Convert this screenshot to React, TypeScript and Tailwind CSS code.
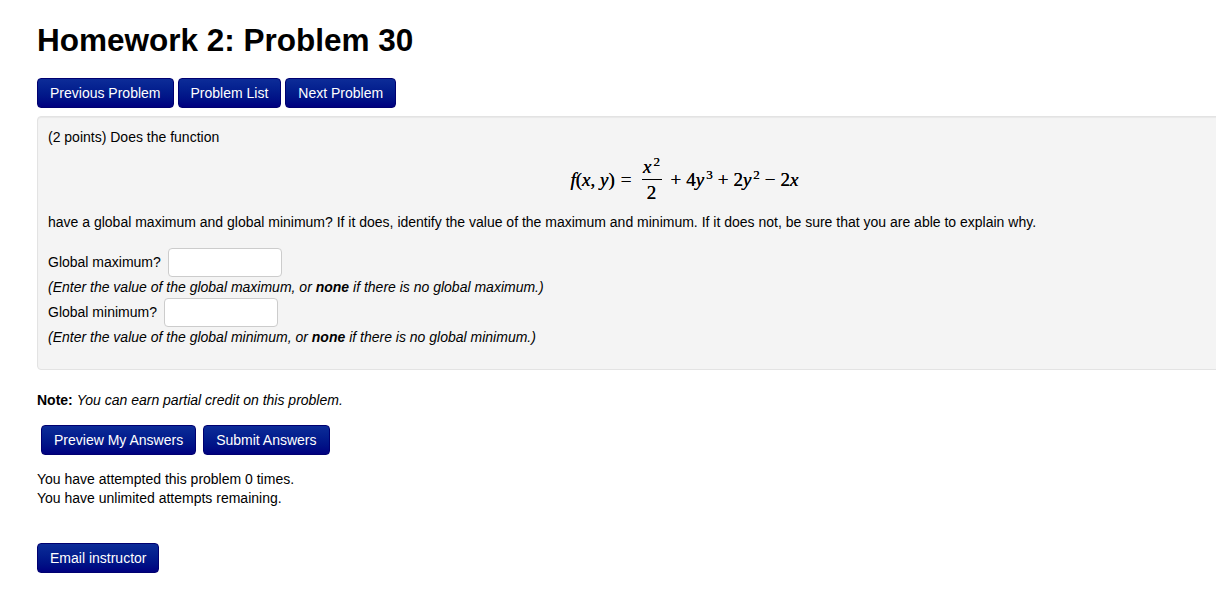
const btn =
  "h-[30px] rounded-[4px] border border-[#000070] bg-linear-to-b from-[#0d2c98] to-[#00007f] px-3 text-[14px] leading-none text-white";

const sup = "relative -top-[7px] ml-[2px] align-baseline text-[13px]";

function Fraction() {
  return (
    <span className="inline-flex flex-col items-center px-[4px]">
      <span className="pb-[3px] leading-none">
        <i>x</i>
        <sup className={sup}>2</sup>
      </span>
      <span className="h-px w-[20px] bg-black" />
      <span className="pt-[3px] leading-none">2</span>
    </span>
  );
}

function Equation() {
  return (
    <div className="flex h-[65px] items-center justify-center font-['Liberation_Serif','Times_New_Roman',serif] text-[19px] text-black [text-shadow:0_0_0.4px_#000]">
      <span className="leading-none">
        <i>f</i>(<i>x</i>, <i>y</i>)<span className="px-[6px]">=</span>
      </span>
      <Fraction />
      <span className="leading-none">
        <span className="px-[5px]">+</span>4<i>y</i>
        <sup className={sup}>3</sup>
        <span className="px-[5px]">+</span>2<i>y</i>
        <sup className={sup}>2</sup>
        <span className="px-[5px]">−</span>2<i>x</i>
      </span>
    </div>
  );
}

function AnswerRow({ label }: { label: string }) {
  return (
    <div className="flex h-[30px] items-center">
      <span>{label}</span>
      <input
        type="text"
        className="ml-[7px] h-[29px] w-[114px] rounded-[4px] border border-[#cccccc] bg-white"
      />
    </div>
  );
}

export default function App() {
  return (
    <div className="min-h-screen overflow-hidden bg-white pl-[37px] pt-[23px] font-['Liberation_Sans',Arial,sans-serif] text-[14px] leading-[20px] text-black">
      <h1 className="text-[31.5px] font-bold leading-[35px]">Homework 2: Problem 30</h1>

      <div className="mt-[20px] flex gap-[4px]">
        <button className={btn}>Previous Problem</button>
        <button className={btn}>Problem List</button>
        <button className={btn}>Next Problem</button>
      </div>

      <div className="mt-[8px] w-[1295px] rounded-[4px] border border-[#e3e3e3] bg-[#f4f4f4] px-[10px] pb-[22px] pt-[10px] shadow-[inset_0_1px_1px_rgba(0,0,0,0.05)]">
        <p>(2 points) Does the function</p>
        <Equation />
        <p>
          have a global maximum and global minimum? If it does, identify the value of the maximum and minimum. If it does not, be sure that you are able to explain why.
        </p>
        <div className="mt-[15px]">
          <AnswerRow label="Global maximum?" />
          <p className="italic">
            (Enter the value of the global maximum, or <b>none</b> if there is no global maximum.)
          </p>
          <AnswerRow label="Global minimum?" />
          <p className="italic">
            (Enter the value of the global minimum, or <b>none</b> if there is no global minimum.)
          </p>
        </div>
      </div>

      <p className="mt-[20px]">
        <b>Note:</b> <i>You can earn partial credit on this problem.</i>
      </p>

      <div className="ml-[4px] mt-[15px] flex gap-[7px]">
        <button className={btn}>Preview My Answers</button>
        <button className={btn}>Submit Answers</button>
      </div>

      <div className="mt-[15px] leading-[19px]">
        <p>You have attempted this problem 0 times.</p>
        <p>You have unlimited attempts remaining.</p>
      </div>

      <button className={`${btn} mt-[35px]`}>Email instructor</button>
    </div>
  );
}
